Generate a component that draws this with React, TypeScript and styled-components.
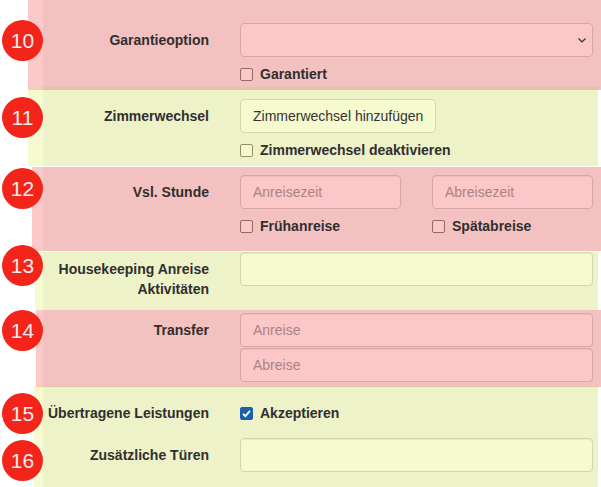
import styled, { createGlobalStyle } from "styled-components";

const GlobalStyle = createGlobalStyle`
  html, body {
    margin: 0;
    padding: 0;
    background: #fff;
  }
  body {
    font-family: "Liberation Sans", Arial, sans-serif;
    font-size: 14px;
    line-height: 20px;
    color: #333;
  }
  * {
    box-sizing: border-box;
  }
`;

type Tone = "red" | "yellow";

const tones = {
  red: {
    overlay: "rgba(243, 35, 35, 0.25)",
    field: "#fcc7c7",
    border: "#d8a6a6",
    placeholder: "#ad8282",
    box: "#946868",
  },
  yellow: {
    overlay: "rgba(219, 235, 67, 0.25)",
    field: "#f6facf",
    border: "#d2d6ac",
    placeholder: "#a6a98a",
    box: "#8f9369",
  },
};

const Page = styled.div`
  width: 601px;
  height: 487px;
  overflow: hidden;
`;

const Section = styled.section<{
  $tone: Tone;
  $left: number;
  $right: number;
  $top: number;
}>`
  position: relative;
  margin: ${(p) => p.$top}px ${(p) => p.$right}px 0 ${(p) => p.$left}px;
  background: ${(p) => tones[p.$tone].overlay};
`;

// grey form body that starts at x=43, under the highlight box
const Inner = styled.div<{ $indent: number; $pt: number; $pb: number }>`
  margin-left: ${(p) => p.$indent}px;
  padding: ${(p) => p.$pt}px 0 ${(p) => p.$pb}px;
  background: rgba(0, 0, 0, 0.03);
`;

const Badge = styled.div<{ $x: number; $y: number }>`
  position: absolute;
  z-index: 2;
  left: ${(p) => p.$x}px;
  top: ${(p) => p.$y}px;
  width: 41px;
  height: 41px;
  border-radius: 50%;
  background: #f32419;
  color: #eeeeee;
  font-size: 21px;
  line-height: 41px;
  text-align: center;
`;

const Row = styled.div<{ $gap?: number }>`
  display: grid;
  grid-template-columns: 166px 353px;
  column-gap: 31px;
  align-items: start;
  min-height: 34px;
  margin-bottom: ${(p) => p.$gap ?? 0}px;
`;

const Label = styled.div`
  padding-top: 7px;
  text-align: right;
  font-weight: bold;
  color: #2f2f2f;
`;

const Controls = styled.div<{ $gap?: number }>`
  display: flex;
  flex-direction: column;
  gap: ${(p) => p.$gap ?? 0}px;
`;

const Halves = styled.div`
  display: grid;
  grid-template-columns: 1fr 1fr;
  column-gap: 31px;
`;

const Field = styled.input<{ $tone: Tone }>`
  display: block;
  width: 100%;
  height: 34px;
  padding: 6px 12px;
  border: 1px solid ${(p) => tones[p.$tone].border};
  border-radius: 4px;
  background: ${(p) => tones[p.$tone].field};
  box-shadow: inset 0 1px 1px rgba(0, 0, 0, 0.06);
  font-family: inherit;
  font-size: 14px;
  color: #333;
  outline: none;

  &::placeholder {
    color: ${(p) => tones[p.$tone].placeholder};
  }
`;

const SelectWrap = styled.div`
  position: relative;
`;

const Select = styled.select<{ $tone: Tone }>`
  display: block;
  width: 100%;
  height: 34px;
  padding: 6px 12px;
  border: 1px solid ${(p) => tones[p.$tone].border};
  border-radius: 4px;
  background: ${(p) => tones[p.$tone].field};
  font-family: inherit;
  font-size: 14px;
  appearance: none;
  outline: none;
`;

const Chevron = styled.svg`
  position: absolute;
  right: 7px;
  top: 15px;
  pointer-events: none;
`;

const Button = styled.button<{ $tone: Tone }>`
  align-self: flex-start;
  height: 34px;
  padding: 6px 12px;
  border: 1px solid ${(p) => tones[p.$tone].border};
  border-radius: 4px;
  background: ${(p) => tones[p.$tone].field};
  font-family: inherit;
  font-size: 14px;
  color: #333;
`;

const Check = styled.label<{ $top?: number }>`
  display: flex;
  align-items: center;
  gap: 7px;
  height: 20px;
  margin-top: ${(p) => p.$top ?? 7}px;
  font-weight: bold;
  color: #2f2f2f;
`;

const Box = styled.span<{ $tone: Tone; $checked?: boolean }>`
  display: inline-flex;
  align-items: center;
  justify-content: center;
  width: 13px;
  height: 13px;
  border-radius: 2px;
  border: 1px solid ${(p) => (p.$checked ? "#1d5eab" : tones[p.$tone].box)};
  background: ${(p) => (p.$checked ? "#1d5eab" : tones[p.$tone].field)};
`;

function CheckBox({
  tone,
  text,
  checked,
  top,
}: {
  tone: Tone;
  text: string;
  checked?: boolean;
  top?: number;
}) {
  return (
    <Check $top={top}>
      <Box $tone={tone} $checked={checked}>
        {checked && (
          <svg width="11" height="11" viewBox="0 0 11 11">
            <path
              d="M2 5.8 L4.4 8.2 L9 2.8"
              fill="none"
              stroke="#fff"
              strokeWidth="1.8"
            />
          </svg>
        )}
      </Box>
      {text}
    </Check>
  );
}

export default function App() {
  return (
    <Page>
      <GlobalStyle />

      <Section $tone="red" $left={28} $right={0} $top={0}>
        <Badge $x={-26} $y={20}>10</Badge>
        <Inner $indent={15} $pt={23} $pb={6}>
          <Row>
            <Label>Garantieoption</Label>
            <Controls>
              <SelectWrap>
                <Select $tone="red">
                  <option></option>
                </Select>
                <Chevron width="8" height="5" viewBox="0 0 8 5">
                  <path d="M0.5 0.5 L4 4 L7.5 0.5" fill="none" stroke="#333" strokeWidth="1.2" />
                </Chevron>
              </SelectWrap>
              <CheckBox tone="red" text="Garantiert" />
            </Controls>
          </Row>
        </Inner>
      </Section>

      <Section $tone="yellow" $left={28} $right={3} $top={-3}>
        <Badge $x={-26} $y={10}>11</Badge>
        <Inner $indent={15} $pt={12} $pb={6}>
          <Row>
            <Label>Zimmerwechsel</Label>
            <Controls>
              <Button $tone="yellow">Zimmerwechsel hinzufügen</Button>
              <CheckBox tone="yellow" text="Zimmerwechsel deaktivieren" />
            </Controls>
          </Row>
        </Inner>
      </Section>

      <Section $tone="red" $left={32} $right={0} $top={1}>
        <Badge $x={-30} $y={1}>12</Badge>
        <Inner $indent={11} $pt={8} $pb={15}>
          <Row>
            <Label>Vsl. Stunde</Label>
            <Halves>
              <Controls>
                <Field $tone="red" placeholder="Anreisezeit" />
                <CheckBox tone="red" text="Frühanreise" />
              </Controls>
              <Controls>
                <Field $tone="red" placeholder="Abreisezeit" />
                <CheckBox tone="red" text="Spätabreise" />
              </Controls>
            </Halves>
          </Row>
        </Inner>
      </Section>

      <Section $tone="yellow" $left={35} $right={3} $top={1}>
        <Badge $x={-33} $y={-7}>13</Badge>
        <Inner $indent={8} $pt={0} $pb={11}>
          <Row>
            <Label>Housekeeping Anreise Aktivitäten</Label>
            <Field $tone="yellow" />
          </Row>
        </Inner>
      </Section>

      <Section $tone="red" $left={36} $right={0} $top={0}>
        <Badge $x={-34} $y={0}>14</Badge>
        <Inner $indent={7} $pt={3} $pb={5}>
          <Row>
            <Label>Transfer</Label>
            <Controls $gap={1}>
              <Field $tone="red" placeholder="Anreise" />
              <Field $tone="red" placeholder="Abreise" />
            </Controls>
          </Row>
        </Inner>
      </Section>

      <Section $tone="yellow" $left={34} $right={3} $top={-1}>
        <Badge $x={-32} $y={7}>15</Badge>
        <Badge $x={-32} $y={54}>16</Badge>
        <Inner $indent={9} $pt={10} $pb={15}>
          <Row $gap={8}>
            <Label>Übertragene Leistungen</Label>
            <CheckBox tone="yellow" text="Akzeptieren" checked top={7} />
          </Row>
          <Row>
            <Label>Zusätzliche Türen</Label>
            <Field $tone="yellow" />
          </Row>
        </Inner>
      </Section>
    </Page>
  );
}
